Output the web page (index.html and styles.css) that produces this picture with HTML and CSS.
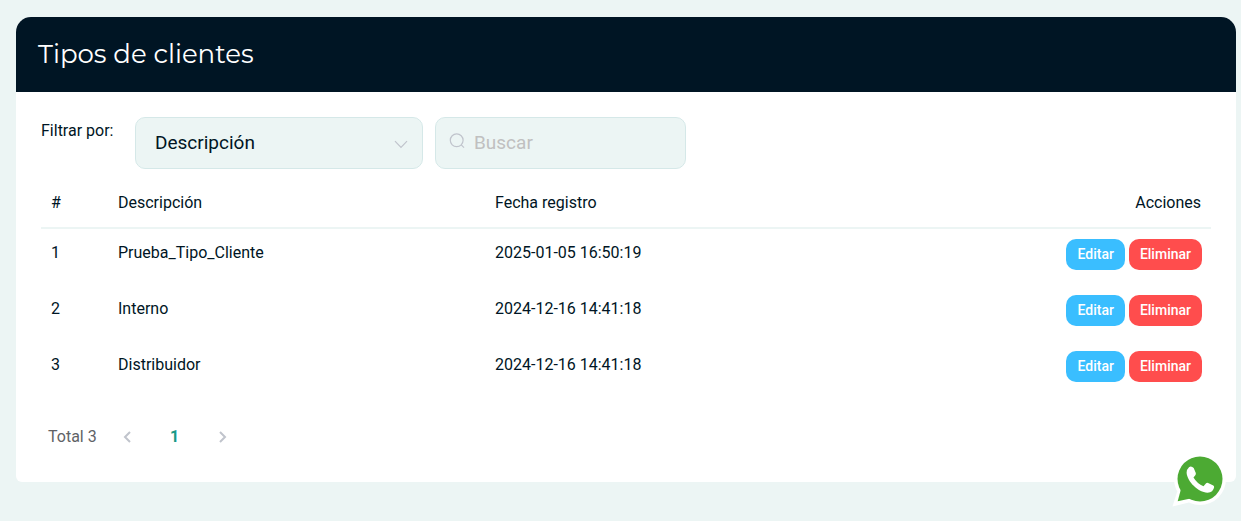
FILE: index.html
```
<!DOCTYPE html>
<html lang="es">
<head>
<meta charset="utf-8">
<meta name="viewport" content="width=device-width, initial-scale=1">
<title>Tipos de clientes</title>
<link rel="stylesheet" href="styles.css">
</head>
<body>
<main class="card">
  <header class="card-header"><h1 class="card-title">Tipos de clientes</h1></header>
  <div class="card-body">
    <form class="filters">
      <label class="filter-label" for="field">Filtrar por:</label>
      <div class="control select-control">
        <select id="field" class="field"><option>Descripción</option></select>
        <svg class="chevron" viewBox="0 0 14 9" aria-hidden="true"><path d="M1 1.2 7 7.4 13 1.2"/></svg>
      </div>
      <div class="control search-control">
        <svg class="search-icon" viewBox="0 0 16 16" aria-hidden="true"><circle cx="7.7" cy="7.3" r="6.4"/><path d="M12.3 11.9 15 14.6"/></svg>
        <input class="field" type="text" placeholder="Buscar" aria-label="Buscar">
      </div>
    </form>
    <table class="table">
      <thead>
        <tr><th class="col-id">#</th><th class="col-name">Descripción</th><th>Fecha registro</th><th class="col-actions">Acciones</th></tr>
      </thead>
      <tbody>
        <tr><td>1</td><td>Prueba_Tipo_Cliente</td><td>2025-01-05 16:50:19</td><td><div class="actions"><button class="btn btn-edit" type="button">Editar</button><button class="btn btn-delete" type="button">Eliminar</button></div></td></tr>
        <tr><td>2</td><td>Interno</td><td>2024-12-16 14:41:18</td><td><div class="actions"><button class="btn btn-edit" type="button">Editar</button><button class="btn btn-delete" type="button">Eliminar</button></div></td></tr>
        <tr><td>3</td><td>Distribuidor</td><td>2024-12-16 14:41:18</td><td><div class="actions"><button class="btn btn-edit" type="button">Editar</button><button class="btn btn-delete" type="button">Eliminar</button></div></td></tr>
      </tbody>
    </table>
    <nav class="pagination" aria-label="Paginación">
      <span class="total">Total 3</span>
      <button class="page-btn" type="button" aria-label="Anterior" disabled><svg class="arrow" viewBox="0 0 8 12" aria-hidden="true"><path d="M7 1 2 6l5 5"/></svg></button>
      <button class="page-btn page-current" type="button" aria-current="page">1</button>
      <button class="page-btn" type="button" aria-label="Siguiente" disabled><svg class="arrow" viewBox="0 0 8 12" aria-hidden="true"><path d="M1 1l5 5-5 5"/></svg></button>
    </nav>
  </div>
</main>
<a class="whatsapp" href="#" aria-label="WhatsApp">
  <svg class="whatsapp-icon" viewBox="0 0 54 53" aria-hidden="true">
    <g fill="#fff"><circle cx="28" cy="25" r="26"/><path d="M0.500 52.500 5.200 37.500 17 48.500Z"/></g>
    <g fill="#4caa33"><circle cx="28" cy="25" r="22.500"/><path d="M5.700 47.300 9 35 18.500 44.500Z"/></g>
    <path fill="#fff" transform="translate(-1.500 -2)" d="M18.500 15.300q1.500-1.300 3.300-.3l1.400 1 2.100 5q.3 1.200-.5 2.200l-1.800 2.300q3.700 6.300 10 8.700l2.600-2.900q.8-.9 2-.4l5.200 2.500q1 .6.800 1.900-.8 5-6.600 5.500c-9.300-.5-20.300-11.200-20.900-20q0-3.400 2.400-5.500Z"/>
  </svg>
</a>
</body>
</html>
```
FILE: styles.css
```
* { box-sizing: border-box; }
body {
  margin: 0;
  padding: 17px 5px 39px 16px;
  background: #ecf5f4;
  color: #001524;
  font: 400 16px/28px Roboto, "Liberation Sans", sans-serif;
}
.card { background: #fff; border-radius: 15px 15px 6px 6px; overflow: hidden; }
.card-header { background: #001524; padding: 20px 22px; }
.card-title {
  margin: 0;
  color: #fff;
  font: 400 26px/35px Montserrat, Inter, sans-serif;
}
.card-body { padding: 25px; }
.filters { display: flex; align-items: flex-start; }
.filter-label { width: 94px; flex: none; }
.control {
  display: flex;
  align-items: center;
  height: 52px;
  border: 1px solid #d5e8e8;
  border-radius: 10px;
  background: #ecf5f4;
}
.select-control { width: 288px; margin-right: 12px; padding: 0 14px 0 19px; }
.search-control { width: 251px; padding: 0 13px; gap: 9px; }
.field {
  flex: 1;
  min-width: 0;
  height: 50px;
  padding: 0;
  border: 0;
  outline: 0;
  background: none;
  appearance: none;
  color: #001524;
  font: inherit;
  font-size: 19px;
}
.search-control .field { padding-bottom: 2px; }
.field::placeholder { color: #c0c0c0; opacity: 1; }
.chevron { width: 14px; height: 9px; margin-top: 3px; }
.search-icon { width: 16px; height: 16px; margin-bottom: 4px; }
.chevron, .search-icon { flex: none; fill: none; stroke: #c0c4cc; stroke-width: 1.2; }
.table { width: 100%; margin-top: 10px; border-collapse: separate; border-spacing: 0; table-layout: fixed; }
.table th, .table td { padding: 10px; text-align: left; vertical-align: top; font-weight: 400; }
.table th { height: 50px; border-bottom: 2px solid #ecf5f4; }
.table td { height: 56px; }
.table .col-id { width: 67px; }
.table .col-name { width: 377px; }
.table .col-actions { text-align: right; }
.actions { display: flex; justify-content: flex-end; gap: 4px; }
.table td:last-child { padding-right: 9px; }
.btn {
  height: 31px;
  padding: 0 11px;
  border: 0;
  border-radius: 10px;
  color: #fff;
  font: 500 14px/31px Roboto, "Liberation Sans", sans-serif;
}
.btn-edit { background: #3abeff; }
.btn-delete { background: #ff4d4d; }
.pagination { display: flex; align-items: center; height: 28px; margin: 26px 0 6px 7px; }
.total { color: #606266; margin-right: 6px; }
.page-btn {
  width: 48px;
  height: 28px;
  padding: 0;
  border: 0;
  background: none;
  color: #1a9988;
  font: 700 16px/28px Roboto, "Liberation Sans", sans-serif;
}
.arrow { display: block; width: 8px; height: 12px; margin: 0 auto; fill: none; stroke: #c0c4cc; stroke-width: 2; }
.whatsapp { position: fixed; right: 15px; bottom: 14px; }
.whatsapp-icon { display: block; width: 54px; height: 53px; overflow: visible; }
```
